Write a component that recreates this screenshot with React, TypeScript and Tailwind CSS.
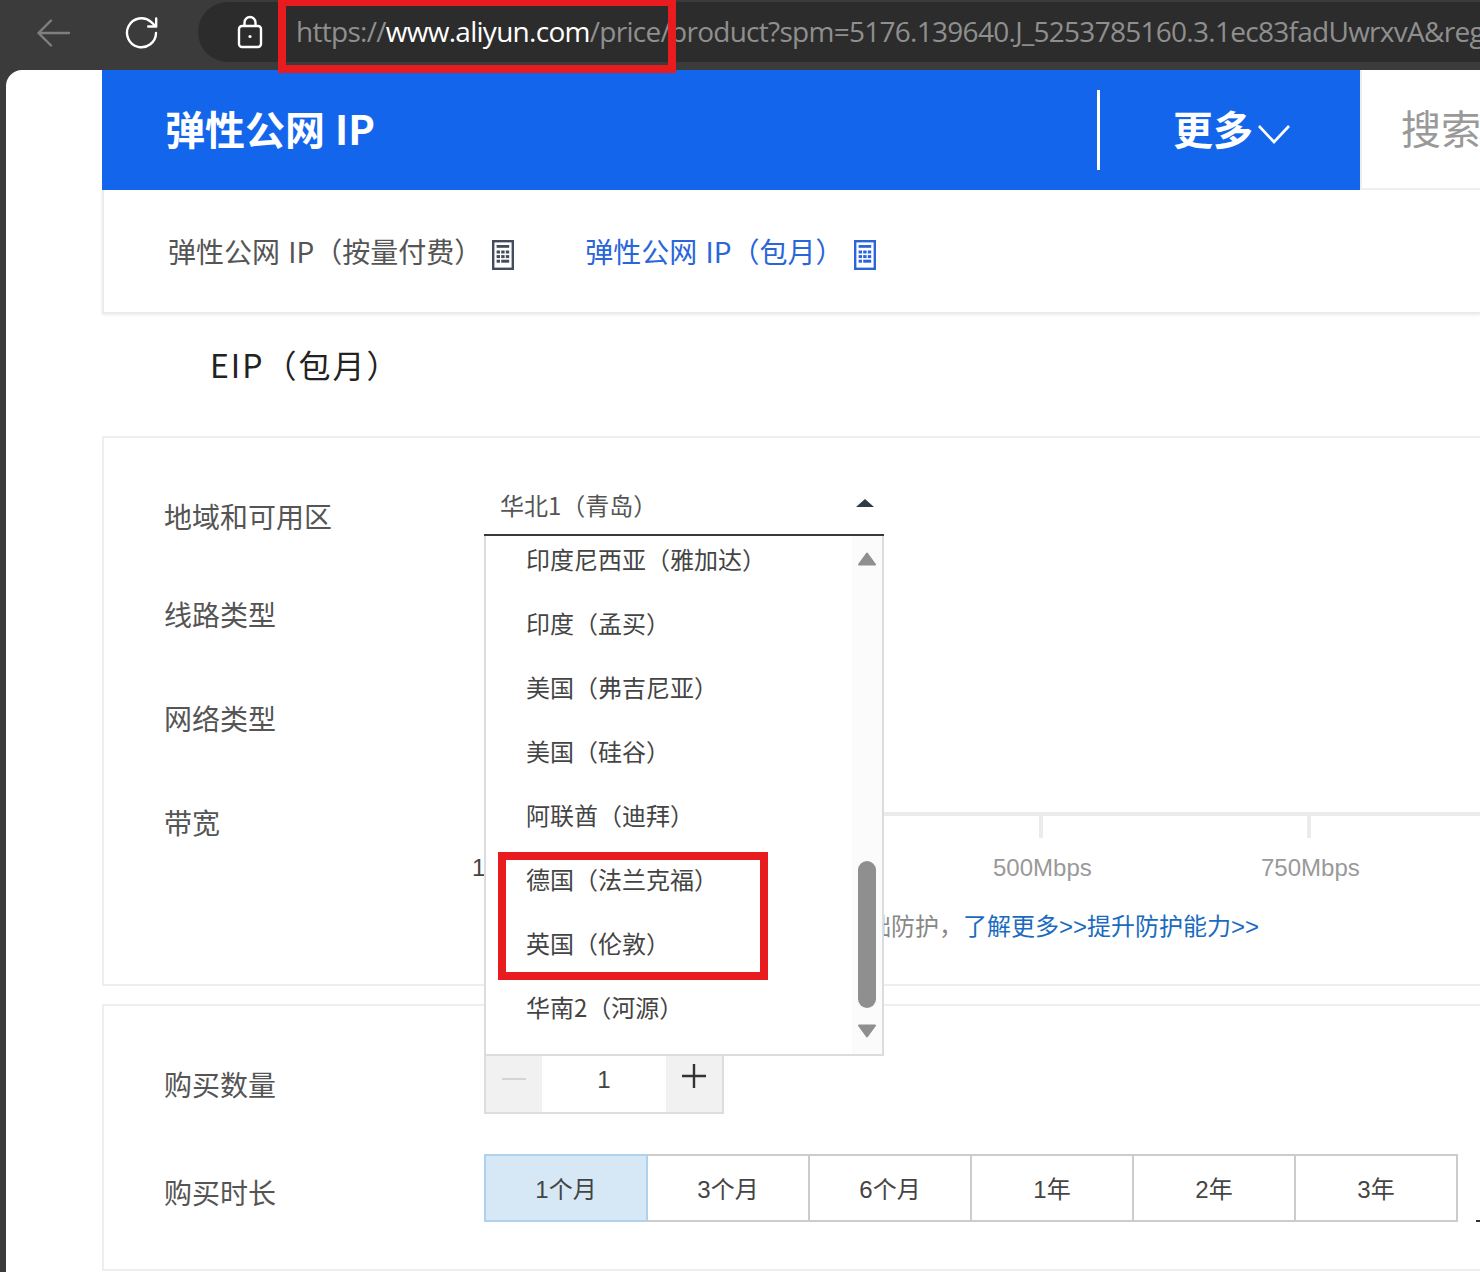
import React from "react";

const FONT = "font-['Liberation_Sans','Noto_Sans_CJK_SC',sans-serif]";
const CJK = "font-['Noto_Sans_CJK_SC','Noto_Sans',sans-serif]";

function Calc({ color }: { color: string }) {
  const cells: React.ReactNode[] = [];
  for (let r = 0; r < 3; r++) {
    for (let c = 0; c < 3; c++) {
      if (r === 2 && c > 0) continue;
      cells.push(<rect key={r + "-" + c} x={4.6 + c * 4.6} y={10.5 + r * 4.6} width="3.4" height="3" fill={color} />);
    }
  }
  return (
    <svg width="22" height="30" viewBox="0 0 22 30" className="shrink-0">
      <rect x="1.2" y="1.2" width="19.6" height="27.6" fill="none" stroke={color} strokeWidth="2.4" />
      <rect x="4.6" y="5" width="12.6" height="2.8" fill={color} />
      {cells}
      <rect x="9.2" y="19.7" width="8" height="3" fill={color} />
    </svg>
  );
}

const Row = ({
  label,
  className,
  labelClass = "",
  children,
}: {
  label: string;
  className: string;
  labelClass?: string;
  children?: React.ReactNode;
}) => (
  <div className={"flex " + className}>
    <div className={"w-[380px] shrink-0 pl-[60px] text-[28px] text-[#555] leading-[40px] whitespace-nowrap " + labelClass}>{label}</div>
    <div className="flex-1 min-w-0">{children}</div>
  </div>
);

const regions = [
  "印度尼西亚（雅加达）",
  "印度（孟买）",
  "美国（弗吉尼亚）",
  "美国（硅谷）",
  "阿联酋（迪拜）",
  "德国（法兰克福）",
  "英国（伦敦）",
  "华南2（河源）",
];

const durations = ["1个月", "3个月", "6个月", "1年", "2年", "3年"];

export default function App() {
  return (
    <div className={"relative w-[1480px] h-[1272px] overflow-hidden bg-[#3b3b3b] flex flex-col " + CJK}>
      {/* browser toolbar */}
      <div className="h-[70px] shrink-0 flex items-start">
        <div className="h-[66px] flex items-center pl-[36px] gap-[54px] w-[198px]">
          <svg width="36" height="32" viewBox="0 0 36 32" fill="none" stroke="#7f7f7f" strokeWidth="2.4" strokeLinecap="round" strokeLinejoin="round">
            <path d="M2.5 16H33M15 3.5 2.5 16 15 28.5" />
          </svg>
          <svg width="34" height="34" viewBox="0 0 34 34" fill="none" stroke="#ffffff" strokeWidth="2.4" strokeLinecap="round" strokeLinejoin="round" className="-ml-[1px]">
            <path d="M31 17a14.5 14.5 0 1 1-5-11.2L31 10.5M31.2 2.5v8h-8" />
          </svg>
        </div>
        <div className="mt-[2px] h-[60px] flex-1 min-w-0 rounded-l-[30px] bg-[#2c2c2c] flex items-center overflow-hidden pl-[39px]">
          <svg width="26" height="34" viewBox="0 0 26 34" fill="none" stroke="#ffffff" strokeWidth="2.4" className="shrink-0">
            <rect x="2" y="11" width="22" height="21" rx="3" />
            <path d="M7.5 11V7.5a5.5 5.5 0 0 1 11 0V11" />
            <circle cx="13" cy="21.5" r="1.6" fill="#ffffff" stroke="none" />
          </svg>
          <div className="ml-[33px] mb-[2px] whitespace-nowrap text-[28px] tracking-[-0.72px] text-[#8f8f8f] font-['Open_Sans',sans-serif]">
            https://<span className="text-white">www.aliyun.com</span>/price/product?spm=5176.139640.J_5253785160.3.1ec83fadUwrxvA&amp;region
          </div>
        </div>
      </div>

      {/* page */}
      <div className="flex-1 min-h-0 ml-[6px] rounded-tl-[16px] bg-white pl-[96px] overflow-hidden">
        {/* header */}
        <div className="flex h-[120px]">
          <div className="w-[1258px] shrink-0 bg-[#1366ec] flex items-center text-white font-bold text-[40px]">
            <div className="pl-[63px] pb-[4px] w-[994px] whitespace-nowrap [word-spacing:1px]">弹性公网 IP</div>
            <div className="ml-[1px] w-[3px] h-[80px] bg-white" />
            <div className="flex-1 pl-[73px] flex items-center">
              <span className="pb-[4px]">更多</span>
              <svg width="34" height="22" viewBox="0 0 34 22" fill="none" stroke="#ffffff" strokeWidth="2.6" className="ml-[4px] mt-[8px]">
                <path d="M2 3 17 19 32 3" />
              </svg>
            </div>
          </div>
          <div className="flex-1 border-l-2 border-b-2 border-[#eeeeee] bg-white pl-[39px] pb-[4px] flex items-center text-[40px] text-[#999] whitespace-nowrap overflow-hidden">
            搜索文档
          </div>
        </div>

        {/* tabs */}
        <div className="h-[124px] border-l-2 border-b-2 border-[#ebebeb] shadow-[0_1px_3px_rgba(0,0,0,0.08)] flex items-center pl-[64px] text-[28px] whitespace-nowrap [word-spacing:2px]">
          <span className="text-[#555]">弹性公网 IP（按量付费）</span>
          <span className="ml-[10px] mt-[8px]"><Calc color="#444c5c" /></span>
          <span className="ml-[71px] text-[#2a66d9]">弹性公网 IP（包月）</span>
          <span className="ml-[11px] mt-[8px]"><Calc color="#2a66d9" /></span>
        </div>

        {/* title */}
        <div className="h-[122px] pt-[26px] pl-[108px] text-[32px] leading-[48px] tracking-[2px] text-[#222] whitespace-nowrap">EIP（包月）</div>

        {/* card 1 */}
        <div className="h-[550px] border-2 border-r-0 border-[#eeeeee] pt-[38px]">
          <Row label="地域和可用区" className="h-[111px]" labelClass="pt-[20px]">
            <div className="w-[400px] h-[61px] border-b-[3px] border-[#3a3a3a] flex items-center justify-between pl-[16px] pr-[10px] text-[24px] text-[#555]">
              <span>华北1（青岛）</span>
              <span className="w-0 h-0 border-x-[9px] border-x-transparent border-b-[8px] border-b-[#2f3b45] mb-[4px]" />
            </div>
          </Row>
          <Row label="线路类型" className="h-[104px] pt-[7px]" />
          <Row label="网络类型" className="h-[104px] pt-[7px]" />
          <Row label="带宽" className="pt-[7px]">
            <div className="relative">
              <div className="h-[4px] mt-[10px] bg-[#ebebeb]" />
              <div className="flex mt-[37px] text-[24px] leading-[30px] text-[#999] font-['Liberation_Sans',sans-serif]">
                <span className="-ml-[12px] w-[500px] text-[#444]">1</span>
                <span className="ml-[21px] w-[268px]">500Mbps</span>
                <span>750Mbps</span>
              </div>
              <span className="absolute left-[555px] top-[2px] w-[4px] h-[24px] bg-[#ebebeb]" />
              <span className="absolute left-[823px] top-[2px] w-[4px] h-[24px] bg-[#ebebeb]" />
              <div className={"mt-[29px] pl-[359px] text-[24px] leading-[30px] text-[#888] whitespace-nowrap " + FONT}>
                基础防护，<span className="text-[#1a6bbf]">了解更多&gt;&gt;提升防护能力&gt;&gt;</span>
              </div>
            </div>
          </Row>
        </div>

        {/* card 2 */}
        <div className="mt-[18px] h-[267px] border-2 border-r-0 border-[#eeeeee] pt-[40px]">
          <Row label="购买数量" className="h-[108px] items-start" labelClass="pt-[18px]">
            <div className="flex w-[240px] h-[68px] border-2 border-[#dddddd] text-[#444] text-[24px]">
              <div className="w-[56px] bg-[#f1f1f1] flex items-center justify-center">
                <span className="w-[24px] h-[2px] bg-[#d4d4d4] mt-[-2px]" />
              </div>
              <div className={"flex-1 flex items-center justify-center pb-[1px] " + FONT}>1</div>
              <div className="w-[56px] bg-[#f1f1f1] flex items-center justify-center relative">
                <svg width="26" height="26" viewBox="0 0 26 26" stroke="#333" strokeWidth="2.4" className="mb-[8px]"><path d="M13 1v24M1 13h24" /></svg>
              </div>
            </div>
          </Row>
          <Row label="购买时长" className="items-start" labelClass="pt-[18px]">
            <div className="flex items-end">
              <div className={"flex text-[24px] text-[#444] " + FONT}>
                {durations.map((d, i) => (
                  <div
                    key={d}
                    className={
                      "h-[68px] pt-[4px] flex items-center justify-center border-y-2 border-r-2 " +
                      (i === 0 ? "w-[164px] bg-[#d6e8f6] border-[#aed2ee] border-l-2" : "w-[162px] border-[#cccccc]")
                    }
                  >
                    {d}
                  </div>
                ))}
              </div>
              <span className="ml-[18px] w-[6px] h-[2px] bg-[#333]" />
            </div>
          </Row>
        </div>
      </div>

      {/* dropdown list */}
      <div className="absolute left-[484px] top-[536px] w-[400px] h-[520px] bg-white border-x-2 border-b-2 border-[#dcdcdc] overflow-hidden">
        <div className="absolute right-0 top-0 bottom-0 w-[30px] bg-[#fbfbfb]" />
        <div className="relative -mt-[9px] pl-[40px] text-[24px] text-[#444] whitespace-nowrap">
          {regions.map((r) => (
            <div key={r} className="h-[64px] flex items-center">{r}</div>
          ))}
        </div>
        <svg width="18" height="14" viewBox="0 0 18 14" className="absolute left-[372px] top-[16px]">
          <path d="M9 1.5 17 12.5H1Z" fill="#8f8f8f" stroke="#8f8f8f" strokeWidth="2" strokeLinejoin="round" />
        </svg>
        <div className="absolute left-[372px] top-[325px] w-[18px] h-[147px] rounded-[9px] bg-[#8f8f8f]" />
        <svg width="18" height="14" viewBox="0 0 18 14" className="absolute left-[372px] top-[488px]">
          <path d="M9 12.5 17 1.5H1Z" fill="#8f8f8f" stroke="#8f8f8f" strokeWidth="2" strokeLinejoin="round" />
        </svg>
      </div>

      {/* annotations */}
      <div className="absolute left-[278px] -top-[2px] w-[398px] h-[75px] border-[8px] border-[#e81c1f]" />
      <div className="absolute left-[498px] top-[852px] w-[270px] h-[128px] border-[8px] border-[#e81c1f]" />
    </div>
  );
}
